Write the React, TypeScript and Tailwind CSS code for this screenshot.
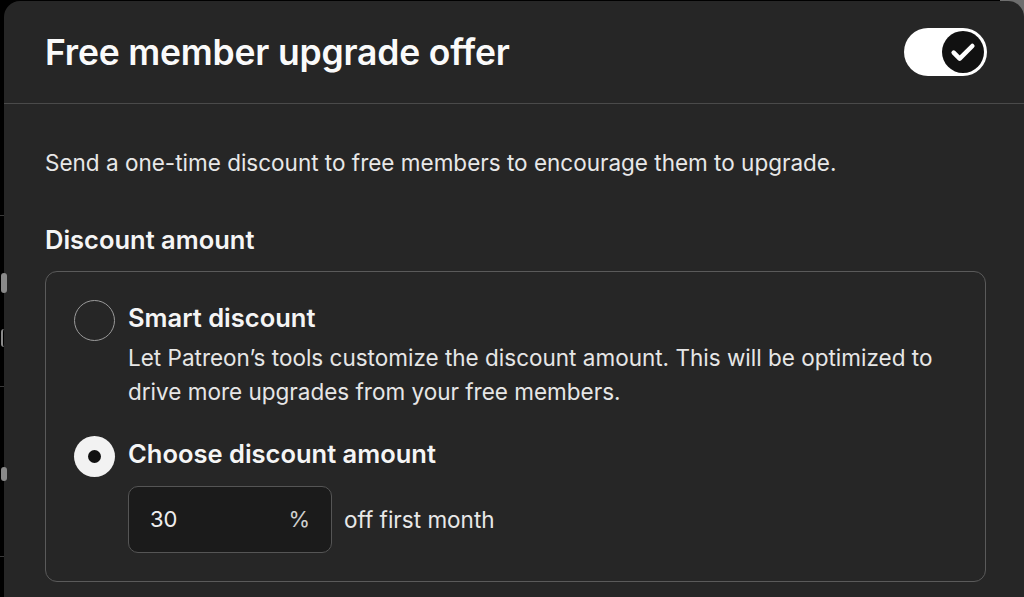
import React from "react";

function LeftStrip() {
  return (
    <div className="relative w-[4px] shrink-0 bg-black">
      <div className="absolute left-0 top-[214px] h-[1px] w-[4px] bg-[#3a3a3a]" />
      <div className="absolute left-[1px] top-[272px] h-[20px] w-[6px] rounded-full bg-[#8a8a8a]" />
      <div className="absolute left-[1px] top-[328px] h-[18px] w-[6px] rounded-full border-l-2 border-[#8a8a8a]" />
      <div className="absolute left-0 top-[385px] h-[1px] w-[4px] bg-[#3a3a3a]" />
      <div className="absolute left-[1px] top-[466px] h-[14px] w-[6px] rounded-full bg-[#8a8a8a]" />
      <div className="absolute left-0 top-[555px] h-[1px] w-[4px] bg-[#3a3a3a]" />
    </div>
  );
}

function Toggle() {
  return (
    <div className="flex h-[48px] w-[83px] items-center justify-end rounded-full bg-white pr-[3px]">
      <div className="flex h-[42px] w-[42px] items-center justify-center rounded-full bg-[#111111]">
        <svg width="32" height="32" viewBox="0 0 24 24" fill="none">
          <path
            d="M5 12.5l4.5 4.5L19 7.5"
            stroke="white"
            strokeWidth="3.4"
            strokeLinecap="round"
            strokeLinejoin="round"
          />
        </svg>
      </div>
    </div>
  );
}

export default function App() {
  return (
    <div
      className="flex h-[597px] w-[1024px] overflow-hidden bg-[linear-gradient(90deg,#000_1000px,#6e6e6e_1000px)] pt-[1px]"
      style={{ fontFamily: "Inter, 'Noto Sans', sans-serif" }}
    >
      <LeftStrip />
      <div className="flex flex-1 flex-col rounded-t-[16px] bg-[#262626] text-[#f5f5f5]">
        <div className="flex h-[103px] items-center justify-between border-b border-[#4a4a4a] pl-[41px] pr-[37px]">
          <h1 className="pt-[2px] text-[35.5px] font-semibold leading-none tracking-[-0.2px] text-[#fafafa]">
            Free member upgrade offer
          </h1>
          <Toggle />
        </div>
        <div className="flex flex-col pl-[41px] pr-[38px] pt-[44px]">
          <p className="text-[22.5px] leading-[30px] text-[#e8e8e8]">
            Send a one-time discount to free members to encourage them to upgrade.
          </p>
          <h2 className="mt-[46px] text-[25.5px] font-semibold leading-[32px] text-[#f5f5f5]">
            Discount amount
          </h2>
          <div className="mt-[15px] flex flex-col rounded-[12px] border border-[#5a5a5a] pb-[28px] pl-[28px] pr-[28px] pt-[27px]">
            <div className="flex gap-[13px]">
              <div className="mt-[1px] h-[41px] w-[41px] shrink-0 rounded-full border-[1.5px] border-[#9a9a9a]" />
              <div className="flex flex-col">
                <div className="text-[25.5px] font-semibold leading-[38px] text-[#f5f5f5]">
                  Smart discount
                </div>
                <p className="mt-[4px] text-[22.5px] leading-[34px] text-[#e6e6e6]">
                  Let Patreon’s tools customize the discount amount. This will be optimized to
                  <br />
                  drive more upgrades from your free members.
                </p>
              </div>
            </div>
            <div className="mt-[26px] flex gap-[13px]">
              <div className="mt-[1px] flex h-[41px] w-[41px] shrink-0 items-center justify-center rounded-full bg-[#f2f2f2]">
                <div className="h-[13px] w-[13px] rounded-full bg-[#111111]" />
              </div>
              <div className="flex flex-col">
                <div className="text-[25.5px] font-semibold leading-[38px] text-[#f5f5f5]">
                  Choose discount amount
                </div>
                <div className="mt-[13px] flex items-center gap-[12px]">
                  <div className="flex h-[67px] w-[204px] items-center justify-between rounded-[10px] border border-[#555555] bg-[#1b1b1b] px-[21px]">
                    <span className="text-[22px] text-[#eeeeee]">30</span>
                    <span className="text-[22px] text-[#cfcfcf]">%</span>
                  </div>
                  <span className="text-[22.5px] text-[#e8e8e8]">off first month</span>
                </div>
              </div>
            </div>
          </div>
        </div>
      </div>
    </div>
  );
}
